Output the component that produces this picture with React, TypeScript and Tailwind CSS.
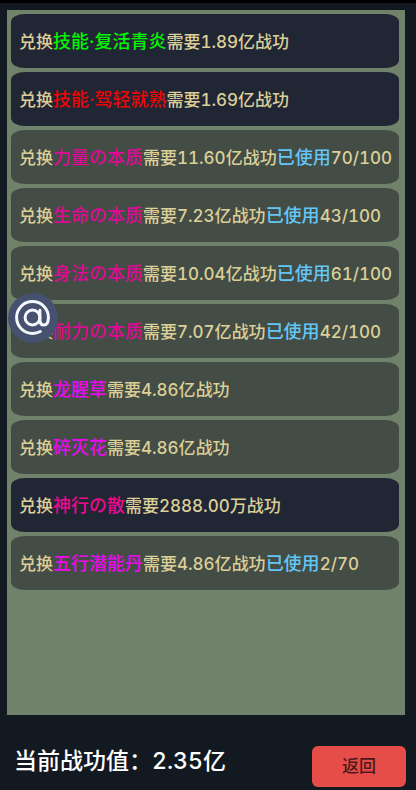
import clsx from "clsx";

type Tone = "green" | "red" | "pink" | "magenta" | "rose";

interface ExchangeItem {
  name: string;
  tone: Tone;
  cost: string;
  used?: string;
  available?: boolean;
}

const items: ExchangeItem[] = [
  { name: "技能·复活青炎", tone: "green", cost: "1.89亿", available: true },
  { name: "技能·驾轻就熟", tone: "red", cost: "1.69亿", available: true },
  { name: "力量の本质", tone: "pink", cost: "11.60亿", used: "70/100" },
  { name: "生命の本质", tone: "pink", cost: "7.23亿", used: "43/100" },
  { name: "身法の本质", tone: "pink", cost: "10.04亿", used: "61/100" },
  { name: "耐力の本质", tone: "pink", cost: "7.07亿", used: "42/100" },
  { name: "龙腥草", tone: "magenta", cost: "4.86亿" },
  { name: "碎灭花", tone: "magenta", cost: "4.86亿" },
  { name: "神行の散", tone: "rose", cost: "2888.00万", available: true },
  { name: "五行潜能丹", tone: "magenta", cost: "4.86亿", used: "2/70" },
];

const toneClass: Record<Tone, string> = {
  green: "text-[#04f404]",
  red: "text-[#ee0404]",
  pink: "text-[#dc0a94]",
  magenta: "text-[#ee08ee]",
  rose: "text-[#ec0a8c]",
};

function ExchangeRow({ name, tone, cost, used, available }: ExchangeItem) {
  return (
    <button
      type="button"
      className={clsx(
        "flex h-[54px] w-full items-center whitespace-nowrap rounded-[14px/8px] pl-2 pt-[2px] text-left text-[17px] text-[#dccf98]",
        available ? "bg-[#212635]" : "bg-[#434d45]"
      )}
    >
      <span className="leading-6">
        兑换
        <span className={clsx("text-[18px]", toneClass[tone])}>{name}</span>
        需要{cost}战功
        {used && (
          <>
            <span className="text-[18px] text-[#63c6f6]">已使用</span>
            {used}
          </>
        )}
      </span>
    </button>
  );
}

function MentionButton() {
  return (
    <button
      type="button"
      aria-label="@"
      className="absolute left-2 top-[290px] h-[50px] w-[50px] rounded-full bg-[#46516f]"
    >
      <svg
        viewBox="0 0 50 50"
        fill="none"
        stroke="#f4f7fb"
        strokeWidth="3"
        strokeLinecap="round"
        strokeLinejoin="round"
      >
        <circle cx="24.5" cy="24.5" r="7.4" />
        <path d="M31.9 17.3V26.4c0 3.6 1.7 5.6 4 5.6 2.8 0 4.5-2.8 4.5-7.5A15.9 15.9 0 1 0 24.5 40.4c2.9 0 5.4-.6 7.8-1.9" />
      </svg>
    </button>
  );
}

export default function App() {
  return (
    <div className="relative flex min-h-screen flex-col border-t-[3px] border-black bg-[#131921] font-['Inter','Noto_Sans_CJK_SC',sans-serif] font-medium tabular-nums">
      <main className="ml-[7px] mr-[11px] mt-[7px] flex-1 bg-[#70836a] pb-4 pl-1 pr-[6px] pt-1">
        <ul className="flex flex-col gap-1">
          {items.map((item) => (
            <li key={item.name}>
              <ExchangeRow {...item} />
            </li>
          ))}
        </ul>
      </main>

      <footer className="flex h-[75px] items-end justify-between pb-[3px] pl-[14px] pr-[10px]">
        <p className="pb-2 text-[23px] leading-9 text-white">当前战功值：2.35亿</p>
        <button
          type="button"
          className="h-[41px] w-[94px] rounded-md bg-[#e64d49] text-[17px] text-[#4d1a1c]"
        >
          返回
        </button>
      </footer>

      <MentionButton />
    </div>
  );
}
